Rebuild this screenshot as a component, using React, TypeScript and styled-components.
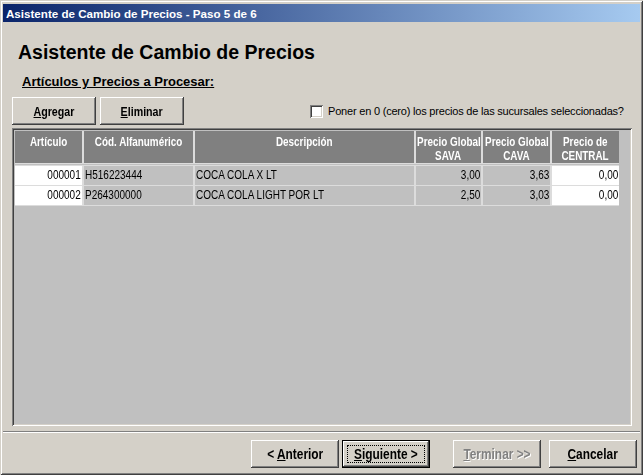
import React from 'react';
import styled, { createGlobalStyle, css } from 'styled-components';

const SANS = `"Liberation Sans", Arial, sans-serif`;

const Global = createGlobalStyle`
  html, body { margin: 0; padding: 0; background: #d4d0c8; }
  body { width: 643px; height: 475px; overflow: hidden; font-family: ${SANS}; }
  * { box-sizing: border-box; }
`;

/* Arial Narrow is Arial at ~82% width: emulate it on Liberation Sans */
const Narrow = styled.span<{ $origin?: string; $scale?: number }>`
  display: inline-block;
  white-space: nowrap;
  transform: scaleX(${(p) => p.$scale ?? 0.82});
  transform-origin: ${(p) => p.$origin ?? 'center'};
`;

const Window = styled.div`
  width: 643px;
  height: 475px;
  background: #d4d0c8;
  display: flex;
  flex-direction: column;
  padding: 4px 3px 3px 3px;
  box-shadow: inset 1px 1px 0 #d4d0c8, inset -1px -1px 0 #404040,
    inset 2px 2px 0 #ffffff, inset -2px -2px 0 #808080;
`;

const TitleBar = styled.div`
  height: 18px;
  display: flex;
  align-items: center;
  padding-left: 3px;
  background: linear-gradient(to right, #0a246a, #a6caf0);
  color: #ffffff;
  font: bold 11.6px ${SANS};
  white-space: nowrap;
`;

const Body = styled.div`
  display: flex;
  flex-direction: column;
  padding: 0 8px 0 9px;
`;

const Heading = styled.h1`
  margin: 19px 0 0 6px;
  font: bold 19.5px/23px ${SANS};
  color: #000;
`;

const SubHeading = styled.h2`
  margin: 10px 0 0 10px;
  font: bold 13px/15px ${SANS};
  text-decoration: underline;
  color: #000;
`;

const Toolbar = styled.div`
  margin-top: 8px;
  height: 28px;
  display: flex;
  align-items: center;
`;

const Btn = styled.button<{ $w?: number; $size?: number; $default?: boolean; $disabled?: boolean }>`
  position: relative;
  width: ${(p) => p.$w ?? 88}px;
  height: 28px;
  padding: 0;
  border: none;
  background: #d4d0c8;
  display: flex;
  align-items: center;
  justify-content: center;
  font: bold ${(p) => p.$size ?? 14.5}px ${SANS};
  color: #000;
  box-shadow: inset -1px -1px 0 #404040, inset 1px 1px 0 #ffffff,
    inset -2px -2px 0 #808080, inset 2px 2px 0 #d4d0c8;
  ${(p) =>
    p.$default &&
    css`
      box-shadow: inset 0 0 0 1px #000, inset -2px -2px 0 #404040,
        inset 2px 2px 0 #ffffff, inset -3px -3px 0 #808080;
      &::after {
        content: '';
        position: absolute;
        left: 5px;
        top: 5px;
        right: 5px;
        bottom: 5px;
        border: 1px dotted #000;
      }
    `}
  ${(p) =>
    p.$disabled &&
    css`
      color: #808080;
      text-shadow: 1px 1px 0 #ffffff;
    `}
  u { text-decoration: underline; }
`;

const CheckWrap = styled.label`
  margin-left: 126px;
  display: flex;
  align-items: center;
  gap: 5px;
  font: 11px ${SANS};
  letter-spacing: -0.2px;
  color: #000;
`;

const CheckBox = styled.span`
  width: 13px;
  height: 13px;
  background: #ffffff;
  box-shadow: inset 1px 1px 0 #808080, inset -1px -1px 0 #ffffff,
    inset 2px 2px 0 #404040, inset -2px -2px 0 #d4d0c8;
`;

const GridBox = styled.div`
  margin-top: 3px;
  width: 620px;
  height: 298px;
  background: #c0c0c0;
  padding: 3px 0 0 3px;
  box-shadow: inset 1px 1px 0 #808080, inset -1px -1px 0 #ffffff,
    inset 2px 2px 0 #404040, inset -2px -2px 0 #d4d0c8;
`;

const Table = styled.div`
  display: grid;
  grid-template-columns: 67px 109px 219px 65px 67px 67px;
  column-gap: 2px;
  row-gap: 1px;
  width: max-content;
  background: #dcdcdc;
  padding-bottom: 1px;
`;

const HeadCell = styled.div`
  height: 32px;
  background: #808080;
  color: #ffffff;
  font: bold 13px/14px ${SANS};
  display: flex;
  flex-direction: column;
  align-items: center;
  padding-top: 4px;
`;

const HeadGap = styled.div`
  grid-column: 1 / -1;
  height: 1px;
  background: #c0c0c0;
`;

const Cell = styled.div<{ $white?: boolean; $right?: boolean }>`
  height: 19px;
  background: ${(p) => (p.$white ? '#ffffff' : '#c0c0c0')};
  font: 12.5px/19px ${SANS};
  color: #000;
  display: flex;
  align-items: center;
  justify-content: ${(p) => (p.$right ? 'flex-end' : 'flex-start')};
  padding: ${(p) => (p.$right ? '0 1px 0 0' : '0 0 0 1px')};
  overflow: hidden;
`;

const Separator = styled.div`
  margin-top: 5px;
  height: 2px;
  border-top: 1px solid #808080;
  border-bottom: 1px solid #ffffff;
`;

const Footer = styled.div`
  display: flex;
  justify-content: flex-end;
  padding: 7px 0 0 0;
`;

const headers = [
  ['Artículo'],
  ['Cód. Alfanumérico'],
  ['Descripción'],
  ['Precio Global', 'SAVA'],
  ['Precio Global', 'CAVA'],
  ['Precio de', 'CENTRAL'],
];

const rows = [
  ['000001', 'H516223444', 'COCA COLA X LT', '3,00', '3,63', '0,00'],
  ['000002', 'P264300000', 'COCA COLA LIGHT POR LT', '2,50', '3,03', '0,00'],
];

const rightCols = [true, false, false, true, true, true];
const whiteCols = [true, false, false, false, false, true];

export default function App() {
  return (
    <>
      <Global />
      <Window>
        <TitleBar>Asistente de Cambio de Precios - Paso 5 de 6</TitleBar>
        <Body>
          <Heading>Asistente de Cambio de Precios</Heading>
          <SubHeading>Artículos y Precios a Procesar:</SubHeading>
          <Toolbar>
            <Btn $w={84} $size={13}>
              <Narrow>
                <u>A</u>gregar
              </Narrow>
            </Btn>
            <Btn $w={84} $size={13} style={{ marginLeft: 4 }}>
              <Narrow>
                <u>E</u>liminar
              </Narrow>
            </Btn>
            <CheckWrap>
              <CheckBox />
              Poner en 0 (cero) los precios de las sucursales seleccionadas?
            </CheckWrap>
          </Toolbar>
          <GridBox>
            <Table>
              {headers.map((h, i) => (
                <HeadCell key={i}>
                  {h.map((l, j) => (
                    <Narrow key={j} $scale={0.76}>
                      {l}
                    </Narrow>
                  ))}
                </HeadCell>
              ))}
              <HeadGap />
              {rows.map((r, ri) => (
                <React.Fragment key={ri}>
                  {r.map((v, ci) => (
                    <Cell key={ci} $white={whiteCols[ci]} $right={rightCols[ci]}>
                      <Narrow $scale={0.8} $origin={rightCols[ci] ? 'right' : 'left'}>
                        {v}
                      </Narrow>
                    </Cell>
                  ))}
                </React.Fragment>
              ))}
            </Table>
          </GridBox>
        </Body>
        <Separator />
        <Footer>
          <Btn>
            <Narrow>
              &lt; <u>A</u>nterior
            </Narrow>
          </Btn>
          <Btn $default style={{ marginLeft: 3 }}>
            <Narrow>
              <u>S</u>iguiente &gt;
            </Narrow>
          </Btn>
          <Btn $disabled style={{ marginLeft: 23 }}>
            <Narrow>
              <u>T</u>erminar &gt;&gt;
            </Narrow>
          </Btn>
          <Btn style={{ marginLeft: 8, marginRight: 3 }}>
            <Narrow>
              <u>C</u>ancelar
            </Narrow>
          </Btn>
        </Footer>
      </Window>
    </>
  );
}
